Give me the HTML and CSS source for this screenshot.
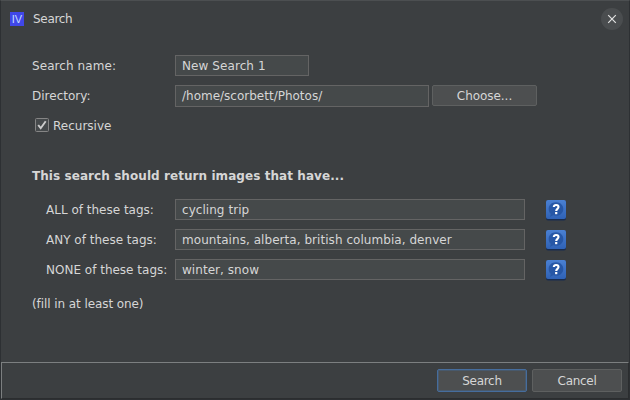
FILE: index.html
```html
<!DOCTYPE html>
<html lang="en">
<head>
<meta charset="utf-8">
<title>Search</title>
<link rel="stylesheet" href="styles.css">
</head>
<body>
<svg class="defs" width="0" height="0" aria-hidden="true">
  <defs>
    <linearGradient id="blue" x1="0" y1="0" x2="0" y2="1">
      <stop offset="0" stop-color="#4a80d2"/>
      <stop offset="1" stop-color="#2f62b6"/>
    </linearGradient>
    <symbol id="help" viewBox="0 0 22 22">
      <rect x="1" y="1.5" width="20" height="20" rx="2" fill="#182c50"/>
      <rect x="1" y="1" width="20" height="19" rx="2" fill="url(#blue)"/>
      <path d="M11 3.2c4.300 0 7.300 2.900 7.300 6.700s-3 6.800-7.300 6.800c-1 0-2-.2-2.900-.5L5 18l.8-3.200C4.400 13.600 3.700 11.900 3.700 9.900 3.700 6.100 6.700 3.200 11 3.200z" fill="#2757a6"/>
      <path d="M8.800 8C8.900 6.500 9.900 6 11.100 6c1.400 0 2.400.8 2.400 2 0 1.900-2.300 1.900-2.300 4" fill="none" stroke="#fff" stroke-width="2.100"/>
      <rect x="10.100" y="13" width="2.200" height="2.200" fill="#fff"/>
    </symbol>
  </defs>
</svg>
<div class="window">
  <header class="titlebar">
    <span class="app-icon">IV</span>
    <span class="title">Search</span>
    <button class="close" aria-label="Close">
      <svg width="22" height="22" viewBox="0 0 22 22"><circle cx="11" cy="11" r="11" fill="#4a4d4f"/><path d="M7.200 7.200l7.600 7.600M14.800 7.200l-7.600 7.600" stroke="#e2e2e2" stroke-width="1.200"/></svg>
    </button>
  </header>
  <main class="content">
    <div class="row name-row"><span class="label">Search name:</span><div class="field short">New Search 1</div></div>
    <div class="row dir-row"><span class="label">Directory:</span><div class="field path">/home/scorbett/Photos/</div><button class="button choose">Choose...</button></div>
    <div class="row check-row">
      <svg class="check" width="14" height="14" viewBox="0 0 14 14"><rect x=".5" y=".5" width="13" height="13" rx="1" fill="#45494b" stroke="#858585"/><path d="M3.200 7l2.500 3.200 5-7" fill="none" stroke="#cdcdcd" stroke-width="1.900"/></svg>
      <span class="check-label">Recursive</span>
    </div>
    <h2 class="heading">This search should return images that have...</h2>
    <div class="tags">
      <div class="row"><span class="label indent">ALL of these tags:</span><div class="field tag">cycling trip</div><svg class="help" width="22" height="22"><use href="#help"/></svg></div>
      <div class="row"><span class="label indent">ANY of these tags:</span><div class="field tag">mountains, alberta, british columbia, denver</div><svg class="help" width="22" height="22"><use href="#help"/></svg></div>
      <div class="row"><span class="label indent">NONE of these tags:</span><div class="field tag">winter, snow</div><svg class="help" width="22" height="22"><use href="#help"/></svg></div>
    </div>
    <p class="note">(fill in at least one)</p>
  </main>
  <footer class="footer">
    <button class="button primary">Search</button>
    <button class="button">Cancel</button>
  </footer>
</div>
</body>
</html>
```

FILE: styles.css
```css
* { box-sizing: border-box; }
body { margin: 0; }
.defs { display: block; }
.window {
  display: flex;
  flex-direction: column;
  width: 630px;
  height: 400px;
  border: 1px solid #2d3033;
  border-top-color: #4c4f51;
  background: #3c3f41;
  color: #d6d6d6;
  font: 12px/16px "DejaVu Sans", sans-serif;
  white-space: nowrap;
}
.titlebar {
  display: flex;
  align-items: center;
  height: 36px;
  padding: 0 6px 0 9px;
}
.app-icon {
  width: 14px;
  height: 14px;
  background: #4047e8;
  color: #c3dcff;
  font: 11px/14px "Liberation Sans", sans-serif;
  text-align: center;
}
.title { margin-left: 9px; letter-spacing: -0.3px; }
.close {
  width: 22px;
  height: 22px;
  margin-left: auto;
  padding: 0;
  border: 0;
  background: none;
}
.close svg { display: block; }
.content { flex: 1; padding: 18px 31px 0; }
.row { display: flex; align-items: center; height: 21px; }
.label { width: 143px; }
.name-row { letter-spacing: 0.08px; }
.indent { padding-left: 14px; }
.field {
  height: 21px;
  padding: 1px 6px 0;
  border: 1px solid #646464;
  background: #45494a;
  line-height: 19px;
}
.short { width: 134px; }
.path { width: 254px; height: 22px; }
.tag { width: 350px; letter-spacing: 0.05px; }
.help { margin-left: 20px; }
.dir-row { height: 22px; margin-top: 9px; }
.button {
  width: 90px;
  height: 23px;
  padding: 0;
  border: 1px solid #5e6060;
  border-radius: 2px;
  background: #4d4f50;
  color: #d6d6d6;
  font: 12px/16px "DejaVu Sans", sans-serif;
  letter-spacing: -0.3px;
}
.choose {
  align-self: flex-start;
  width: 105px;
  height: 21px;
  margin-left: 3px;
  letter-spacing: -0.05px;
}
.check-row { height: 20px; margin-top: 8px; padding-left: 3px; gap: 4px; }
.check-label { padding-top: 2px; }
.heading { margin: 33px 0 0; font-size: 12px; line-height: 16px; letter-spacing: 0.07px; }
.tags { display: grid; gap: 9px; margin-top: 15px; }
.note { margin: 16px 0 0; letter-spacing: -0.08px; }
.footer {
  display: flex;
  align-items: flex-start;
  justify-content: flex-end;
  gap: 5px;
  height: 37px;
  padding: 6px 6px 0 0;
  border: 1px solid #7c7f80;
  border-right-color: #2b2d2f;
  border-bottom-color: #2b2d2f;
}
.primary { border-color: #466d9d; box-shadow: inset 0 0 0 1px #48596c; }
```
